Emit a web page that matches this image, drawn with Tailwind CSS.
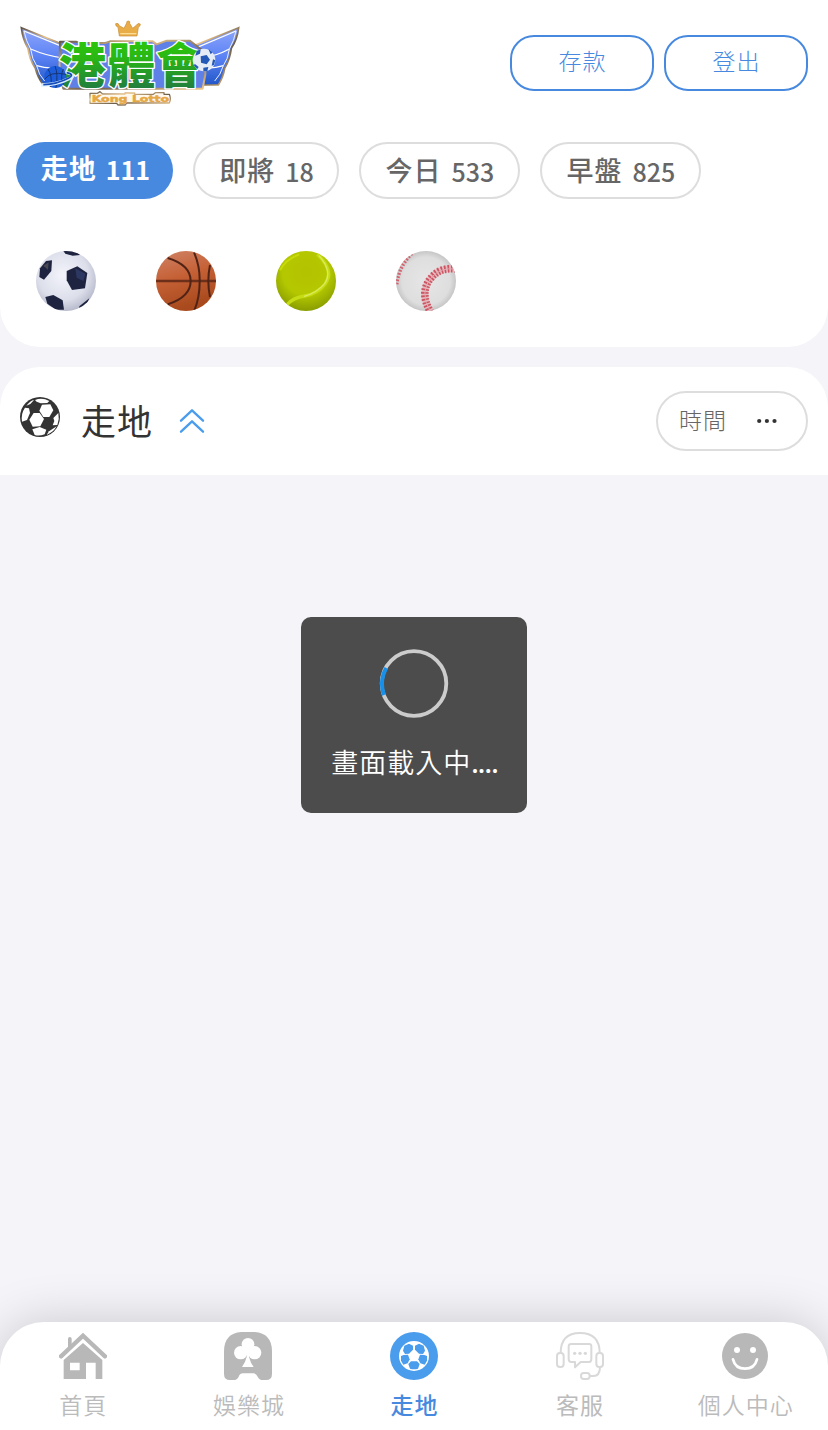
<!DOCTYPE html>
<html lang="zh-Hant">
<head>
<meta charset="utf-8">
<meta name="viewport" content="width=device-width, initial-scale=1">
<title>港體會</title>
<script src="https://cdn.jsdelivr.net/npm/@tailwindcss/browser@4"></script>
</head>
<body class="relative flex h-[1430px] w-[828px] flex-col overflow-hidden bg-[#f4f4f9] font-['Noto_Sans_CJK_TC',sans-serif]">

<header class="h-[347px] shrink-0 rounded-b-[40px] bg-white">
  <div class="flex h-[126px] items-center justify-between pl-[10px] pr-5">
    <svg class="h-[105px] w-[240px]" viewBox="0 0 720 315">
      <defs>
        <linearGradient id="green" x1="0" y1="95" x2="0" y2="228" gradientUnits="userSpaceOnUse"><stop offset="0" stop-color="#2dc40c"/><stop offset=".35" stop-color="#2ab614"/><stop offset="1" stop-color="#22803c"/></linearGradient>
        <linearGradient id="wing" x1="0" y1="0" x2="0" y2="1"><stop offset="0" stop-color="#8fa6fb"/><stop offset=".5" stop-color="#5c83f5"/><stop offset="1" stop-color="#2257c8"/></linearGradient>
        <linearGradient id="gold" x1="0" y1="0" x2="1" y2="1"><stop offset="0" stop-color="#5d5348"/><stop offset=".3" stop-color="#e9c48a"/><stop offset=".6" stop-color="#6b5d4c"/><stop offset="1" stop-color="#eec687"/></linearGradient>
      </defs>
      <g>
        <path d="M34 50L170 105L210 222H100Q82 198 76 172Q58 145 54 112Q38 85 34 50Z" fill="url(#wing)" stroke="url(#gold)" stroke-width="5"/>
        <path d="M42 60L165 110M62 114Q110 135 165 142M80 164Q110 174 150 170" fill="none" stroke="#fff" stroke-width="4"/>
        <path d="M42 60Q48 90 62 114Q66 145 80 164Q86 192 104 210" fill="none" stroke="#e9edff" stroke-width="3"/>
      </g>
      <g>
        <path d="M686 50L550 105L510 222H625Q640 198 644 172Q660 145 664 112Q682 85 686 50Z" fill="url(#wing)" stroke="url(#gold)" stroke-width="5"/>
        <path d="M678 60L560 110M658 114Q620 135 570 142M640 164Q610 174 570 170" fill="none" stroke="#fff" stroke-width="4"/>
        <path d="M678 60Q672 90 658 114Q654 145 640 164Q632 192 614 210" fill="none" stroke="#e9edff" stroke-width="3"/>
      </g>
      <path d="M150 92H198L212 96H286L300 91H428L440 100L470 89H540L586 125V190L578 233H160L148 190Z" fill="#5f80e6" stroke="url(#gold)" stroke-width="6" stroke-linejoin="round"/>
      <g font-family="Noto Sans CJK TC" font-weight="900" font-size="142" text-anchor="middle" stroke-linejoin="round" fill="url(#green)" stroke="#fff" stroke-width="8" paint-order="stroke">
        <text x="217" y="215">港</text><text x="364" y="215">體</text><text x="510" y="215">會</text>
      </g>
      <g transform="translate(-3 0)">
        <path d="M331 75L327 49Q318 44 320 38Q328 34 331 44L345 52L353 36Q352 30 358 30Q364 30 362 37L371 52L382 43Q386 34 394 39Q394 46 388 49L384 75Z" fill="#e9ad48" stroke="#c98b35" stroke-width="2"/>
        <path d="M334 68H382" stroke="#fbdc94" stroke-width="4"/>
      </g>
      <g>
        <circle cx="136" cy="198" r="33" fill="#1d5ddb"/>
        <path d="M104 205Q120 180 168 190M135 165Q145 190 138 230M114 174Q128 195 122 228M160 174Q150 195 160 220" fill="none" stroke="#173573" stroke-width="3"/>
        <path d="M94 222Q140 222 180 202Q200 190 168 184" fill="none" stroke="#d7edff" stroke-width="10"/>
        <path d="M100 221Q140 220 178 200Q194 190 170 185" fill="none" stroke="#164bb8" stroke-width="5"/>
      </g>
      <g>
        <circle cx="582" cy="147" r="34" fill="#e6ecf5"/>
        <path d="M572 136L590 132L600 146L590 160L573 155ZM560 120L572 115L570 128L556 134ZM595 114L608 124L602 130ZM609 145L616 148L612 162L605 164ZM554 158L566 168L562 174L552 164ZM580 170L595 168L592 180L580 181Z" fill="#2459b8"/>
      </g>
      <path d="M240 247H262L270 242L278 249H345V246H374V250H430L436 245H462V250H478Q484 264 478 276H350L346 282H324L320 277H240Z" fill="#fff8ec" stroke="url(#gold)" stroke-width="4" stroke-linejoin="round"/>
      <text x="245" y="273" textLength="232" lengthAdjust="spacingAndGlyphs" font-family="DejaVu Sans" font-weight="700" font-size="28" fill="#e5a744" stroke="#e5a744" stroke-width="1.500">Kong Lotto</text>
    </svg>
    <div class="flex gap-[10px] text-[23px] font-light text-[#4789df]">
      <button class="h-14 w-36 rounded-[24px] border-2 border-[#4789df] pb-[5px] pl-px tracking-[1px]">存款</button>
      <button class="h-14 w-36 rounded-[24px] border-2 border-[#4789df] pb-[5px] pl-px tracking-[1px]">登出</button>
    </div>
  </div>

  <nav class="mt-4 flex gap-5 pl-4 text-[27px] font-medium text-[#666]">
    <div class="flex h-[57px] w-[157px] items-center justify-center gap-[9px] rounded-full bg-[#4789df] pb-1 pl-[2px] font-bold text-white"><span class="tracking-[1px]">走地</span><span class="pt-[2px] text-[25px]">111</span></div>
    <div class="flex h-[57px] w-[146px] items-center justify-center gap-[10px] rounded-full border-2 border-[#ddd] pl-px"><span class="tracking-[1px]">即將</span><span class="pt-[2px] text-[25px]">18</span></div>
    <div class="flex h-[57px] w-[161px] items-center justify-center gap-[10px] rounded-full border-2 border-[#ddd] pl-px"><span class="tracking-[1px]">今日</span><span class="pt-[2px] text-[25px]">533</span></div>
    <div class="flex h-[57px] w-[161px] items-center justify-center gap-[10px] rounded-full border-2 border-[#ddd] pl-px"><span class="tracking-[1px]">早盤</span><span class="pt-[2px] text-[25px]">825</span></div>
  </nav>

  <div class="mt-[52px] flex gap-[60px] pl-9">
    <svg class="size-[60px]" viewBox="0 0 180 180">
      <defs><radialGradient id="sb" cx=".45" cy=".4" r=".6"><stop offset="0" stop-color="#f3f4fb"/><stop offset=".7" stop-color="#dcdeea"/><stop offset="1" stop-color="#b9bccd"/></radialGradient><clipPath id="cc"><circle cx="90" cy="90" r="90"/></clipPath></defs>
      <g clip-path="url(#cc)"><rect width="180" height="180" fill="url(#sb)"/>
      <g fill="#1e2440"><path d="M92 60L124 46L154 66L147 112L108 117L92 88Z"/><path d="M12 52L30 30L48 28L46 60L24 86L10 78Z"/><path d="M28 138L52 132L80 148L84 176L60 176L34 158Z"/><path d="M82 0H120L132 12L110 14L88 8Z"/><path d="M130 166L160 142L150 166L130 180Z"/></g>
      <path d="M118 52L148 68L142 90L122 80Z" fill="#364579" opacity=".6"/><path d="M22 44L38 34L36 56Z" fill="#66605e" opacity=".6"/></g>
    </svg>
    <svg class="size-[60px]" viewBox="0 0 180 180">
      <defs><linearGradient id="bb" x1="0" y1="0" x2=".3" y2="1"><stop offset="0" stop-color="#d08468"/><stop offset=".5" stop-color="#c56035"/><stop offset="1" stop-color="#a84a1d"/></linearGradient></defs>
      <g clip-path="url(#cc)"><rect width="180" height="180" fill="url(#bb)"/>
      <g fill="none" stroke="#4f2316" stroke-width="6"><path d="M0 90H180" stroke="#6b2f1a" stroke-width="8"/><path d="M35 21Q104 42 104 90Q104 138 35 160"/><path d="M114 4Q132 45 131 92Q131 140 115 178"/><path d="M162 42Q152 90 162 138"/></g></g>
    </svg>
    <svg class="size-[60px]" viewBox="0 0 180 180">
      <defs><radialGradient id="tb" cx=".5" cy=".35" r=".7"><stop offset="0" stop-color="#b4c200"/><stop offset=".55" stop-color="#b4c800"/><stop offset="1" stop-color="#819500"/></radialGradient></defs>
      <g clip-path="url(#cc)"><rect width="180" height="180" fill="url(#tb)"/>
      <path d="M124 10Q176 58 148 98Q125 128 86 135Q52 140 34 160" fill="none" stroke="#c6dc14" stroke-width="10"/><path d="M129 14Q171 62 146 98Q122 126 84 136" fill="none" stroke="#dcea60" stroke-width="4"/><path d="M12 58Q28 26 70 10" fill="none" stroke="#c8da08" stroke-width="6"/></g>
    </svg>
    <svg class="size-[60px]" viewBox="0 0 180 180">
      <defs><radialGradient id="wb" cx=".5" cy=".5" r=".5"><stop offset="0" stop-color="#e6e6e6"/><stop offset=".8" stop-color="#dedede"/><stop offset="1" stop-color="#c6c6c6"/></radialGradient></defs>
      <g clip-path="url(#cc)"><rect width="180" height="180" fill="url(#wb)"/>
      <g fill="none"><path d="M180 54Q132 48 106 80Q68 122 104 184" stroke="#e5b9be" stroke-width="20"/><path d="M180 54Q132 48 106 80Q68 122 104 184" stroke="#cc5562" stroke-width="23" stroke-dasharray="5 5"/><path d="M180 54Q132 48 106 80Q68 122 104 184" stroke="#e0a9b0" stroke-width="3"/><path d="M48 8Q8 46 2 104" stroke="#d4606d" stroke-width="10" stroke-dasharray="5 5"/></g></g>
    </svg>
  </div>
</header>

<section class="mt-5 flex h-[108px] shrink-0 items-center rounded-t-[40px] bg-white pl-5 pr-5">
  <svg class="mb-2 size-10" viewBox="0 0 120 120">
    <circle cx="60" cy="60" r="60" fill="#333"/>
    <g fill="#fff">
      <path d="M41 48H59L72 66L61 88L38 89L28 68Z"/>
      <path d="M66 23L91 22L100 40L88 60L70 60L58 41Z"/>
      <path d="M15 32L27 34L30 48L21 69L6 74Q2 50 15 32Z"/>
      <path d="M45 9Q66 0 88 12L82 18L62 19L50 14Z"/>
      <path d="M19 26Q31 11 42 9L31 21Z"/>
      <path d="M37 97L59 90L79 98L74 112Q58 118 44 114Z"/>
      <path d="M100 63L115 48Q119 66 112 84L98 85L103 72Z"/>
      <path d="M87 103L110 88Q100 107 80 113Z"/>
    </g>
  </svg>
  <h1 class="ml-[21px] pb-[2px] text-[35px] leading-[50px] tracking-[1px] text-[#333]">走地</h1>
  <svg class="ml-[25px] size-7" viewBox="0 0 84 84" fill="none" stroke="#4a9cec" stroke-width="7" stroke-linecap="round" stroke-linejoin="round"><path d="M9 41L42 10L75 41M9 74L42 43L75 74"/></svg>
  <button class="ml-auto flex h-[60px] w-[152px] items-center rounded-full border-2 border-[#ddd] pl-[21px] text-[23px] font-light text-[#666]">
    <span class="pb-1 tracking-[1px]">時間</span>
    <svg class="ml-[30px] h-[6px] w-5" viewBox="0 0 20 6" fill="#333"><circle cx="2.200" cy="3" r="2.100"/><circle cx="9.900" cy="3" r="2.100"/><circle cx="17.500" cy="3" r="2.100"/></svg>
  </button>
</section>

<div class="mt-[142px] flex h-[196px] w-[226px] shrink-0 flex-col items-center self-center rounded-[10px] bg-[#4c4c4c] pt-8">
  <svg class="size-[70px]" viewBox="0 0 70 70" fill="none"><circle cx="35" cy="34.500" r="32.300" stroke="#ccc" stroke-width="3.800"/><path d="M7.300 19A32.300 32.300 0 0 0 5 46" stroke="#1890ea" stroke-width="4"/></svg>
  <p class="mt-[23px] pl-px text-[27px] leading-10 tracking-[1px] whitespace-nowrap text-white"><span class="font-[350]">畫面載入中</span><span class="text-[25px] font-medium tracking-[-0.8px]">....</span></p>
</div>

<footer class="mt-auto grid h-[108px] shrink-0 grid-cols-5 rounded-t-[44px] bg-white pt-[10px] text-[23px] leading-8 tracking-[1px] text-[#bbb] shadow-[0_0_50px_rgba(0,0,0,0.18)]">
  <div class="flex flex-col items-center gap-2">
    <svg class="size-12" viewBox="0 0 144 144"><path d="M6 73L72 11L138 73" fill="none" stroke="#b8b8b8" stroke-width="13" stroke-linecap="round"/><path d="M27 48V20Q27 15 32 15Q38 15 38 20V40Z" fill="#b8b8b8"/><path fill-rule="evenodd" d="M14 84L72 33L130 84V141H110V92H81V141H14ZM33 92V115H62V92Z" fill="#b8b8b8"/></svg>
    <span class="pl-px font-[350]">首頁</span>
  </div>
  <div class="flex flex-col items-center gap-2">
    <svg class="size-12" viewBox="0 0 144 144"><path d="M52 0H92Q144 4 144 58V126Q144 144 126 144H116Q106 144 101 134Q97 124 88 124H57Q48 124 44 134Q39 144 29 144H18Q0 144 0 126V58Q0 4 52 0Z" fill="#b8b8b8"/><g fill="#fff"><circle cx="72" cy="37" r="19"/><circle cx="50" cy="62" r="20"/><circle cx="92" cy="62" r="20"/><path d="M66 50H78L75 75Q80 94 89 105H54Q64 92 68 75Z"/></g></svg>
    <span class="pl-px font-[350]">娛樂城</span>
  </div>
  <div class="flex flex-col items-center gap-2">
    <svg class="size-12" viewBox="0 0 144 144"><circle cx="72" cy="72" r="72" fill="#4a9cec"/><circle cx="72" cy="72" r="45" fill="#fff"/><g fill="#4a9cec"><path d="M39 56L43 41L57 35L69 41V53L57 65L45 66Z"/><path d="M105 56L101 41L87 35L75 41V53L87 65L99 66Z"/><path d="M33 72L41 69L54 68L59 82L53 94L40 98L33 86Z"/><path d="M111 72L103 69L90 68L85 82L91 94L104 98L111 86Z"/><path d="M63 88H81L89 96L84 110Q72 113 60 110L55 96Z"/></g></svg>
    <span class="pl-px font-medium text-[#4789df]">走地</span>
  </div>
  <div class="flex flex-col items-center gap-2">
    <svg class="size-12" viewBox="0 0 144 144" fill="none" stroke="#d9d9d9" stroke-width="6" stroke-linejoin="round"><path d="M14 63Q14 3 72 3Q131 3 131 63M132 104Q132 132 112 132H102"/><rect x="3" y="63" width="20" height="42" rx="9"/><rect x="121" y="63" width="20" height="42" rx="9"/><rect x="75" y="123" width="26" height="18" rx="8"/><path d="M46 36H99Q106 36 106 43V82Q106 90 99 90H74L57 106V90H46Q38 90 38 82V43Q38 36 46 36Z"/><g fill="#d9d9d9" stroke="none"><circle cx="56" cy="64" r="5"/><circle cx="72" cy="64" r="5"/><circle cx="88" cy="64" r="5"/></g></svg>
    <span class="pl-px">客服</span>
  </div>
  <div class="flex flex-col items-center gap-2">
    <svg class="size-12" viewBox="0 0 144 144"><circle cx="72" cy="72" r="69" fill="#b8b8b8"/><g fill="#fff"><circle cx="48" cy="54" r="9"/><circle cx="96" cy="54" r="9"/></g><path d="M36 82Q43 110 72 110Q101 110 108 82" fill="none" stroke="#fff" stroke-width="8" stroke-linecap="round"/></svg>
    <span class="pl-px font-[350]">個人中心</span>
  </div>
</footer>
</body>
</html>
